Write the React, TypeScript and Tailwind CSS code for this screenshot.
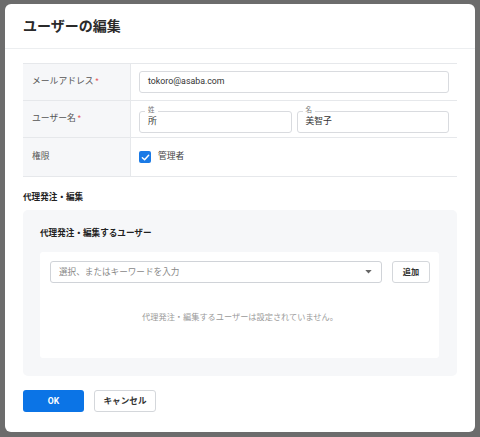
import React from 'react';

const font = { fontFamily: 'Roboto, "Noto Sans CJK JP", sans-serif' };

const Required = () => <span className="ml-[2px] text-[7px] text-[#e5484d] self-start mt-[12px]">*</span>;

const FloatingInput = ({ label, value }: { label: string; value: string }) => (
  <div className="relative flex-1 h-[22px] rounded-[3px] border border-[#d9dbdf] flex items-center px-[8px]">
    <span className="absolute -top-[6px] left-[5px] bg-white px-[3px] text-[6.5px] leading-[9px] text-[#777]">
      {label}
    </span>
    <span className="text-[8.8px] text-[#333]">{value}</span>
  </div>
);

export default function App() {
  return (
    <div className="w-[480px] h-[437px] bg-[#6c6c6c] overflow-hidden pt-[4px] pl-[5px]" style={font}>
      <div className="w-[470px] h-[428px] bg-white rounded-[6px] flex flex-col">
        {/* Header */}
        <div className="h-[45px] border-b border-[#eceef0] flex items-center px-[18px]">
          <h2 className="text-[14px] font-bold text-[#2a2a2a]">ユーザーの編集</h2>
        </div>

        <div className="px-[18px]">
          {/* Table */}
          <div className="mt-[14px] border-t border-[#e6e8eb] text-[8.8px]">
            <div className="flex h-[37px] border-b border-[#e6e8eb]">
              <div className="w-[108px] bg-[#f6f7f9] border-r border-[#e6e8eb] flex items-center pl-[9px] text-[#555]">
                メールアドレス<Required />
              </div>
              <div className="flex-1 flex items-center px-[8px]">
                <div className="w-full h-[22px] rounded-[3px] border border-[#d9dbdf] flex items-center px-[8px] text-[#333]">
                  tokoro@asaba.com
                </div>
              </div>
            </div>
            <div className="flex h-[37px] border-b border-[#e6e8eb]">
              <div className="w-[108px] bg-[#f6f7f9] border-r border-[#e6e8eb] flex items-center pl-[9px] text-[#555]">
                ユーザー名<Required />
              </div>
              <div className="flex-1 flex items-center gap-[5px] px-[8px] pt-[5px]">
                <FloatingInput label="姓" value="所" />
                <FloatingInput label="名" value="美智子" />
              </div>
            </div>
            <div className="flex h-[39px] border-b border-[#e6e8eb]">
              <div className="w-[108px] bg-[#f6f7f9] border-r border-[#e6e8eb] flex items-center pl-[9px] text-[#555]">
                権限
              </div>
              <div className="flex-1 flex items-center px-[8px] gap-[7px]">
                <span className="w-[12px] h-[12px] rounded-[2px] bg-[#1a7ae6] flex items-center justify-center">
                  <svg width="9" height="9" viewBox="0 0 10 10" fill="none">
                    <path d="M1.5 5.2 L4 7.5 L8.5 2.5" stroke="white" strokeWidth="1.6" strokeLinecap="round" strokeLinejoin="round" />
                  </svg>
                </span>
                <span className="text-[#444]">管理者</span>
              </div>
            </div>
          </div>

          {/* Proxy section */}
          <div className="mt-[12px] text-[8.6px] leading-[16px] font-bold text-[#222]">代理発注・編集</div>
          <div className="mt-[5px] h-[166px] bg-[#f6f7f9] rounded-[5px] px-[17px] pr-[18px] pt-[15px]">
            <div className="text-[8.6px] leading-[16px] font-bold text-[#222]">代理発注・編集するユーザー</div>
            <div className="mt-[11px] h-[106px] bg-white rounded-[3px] pt-[9px] px-[10px] pr-[9px]">
              <div className="flex gap-[10px]">
                <div className="flex-1 h-[22px] rounded-[3px] border border-[#d0d3d8] flex items-center justify-between px-[8px] pr-[9px]">
                  <span className="text-[8.6px] text-[#888]">選択、またはキーワードを入力</span>
                  <svg width="7" height="4" viewBox="0 0 8 5">
                    <path d="M0 0 L8 0 L4 4.5 Z" fill="#666" />
                  </svg>
                </div>
                <button className="w-[38px] h-[22px] rounded-[3px] border border-[#d4d7db] bg-white text-[8.2px] font-bold text-[#333]">
                  追加
                </button>
              </div>
              <div className="mt-[26px] text-center text-[8.2px] leading-[16px] text-[#9a9a9a]">
                代理発注・編集するユーザーは設定されていません。
              </div>
            </div>
          </div>

          {/* Footer */}
          <div className="mt-[14px] flex gap-[10px]">
            <button className="w-[61px] h-[22px] rounded-[3px] bg-[#0b74e6] text-white text-[8.6px] font-bold">
              OK
            </button>
            <button className="w-[62px] h-[22px] rounded-[3px] border border-[#d4d7db] bg-white text-[8.6px] font-bold text-[#333]">
              キャンセル
            </button>
          </div>
        </div>
      </div>
    </div>
  );
}
